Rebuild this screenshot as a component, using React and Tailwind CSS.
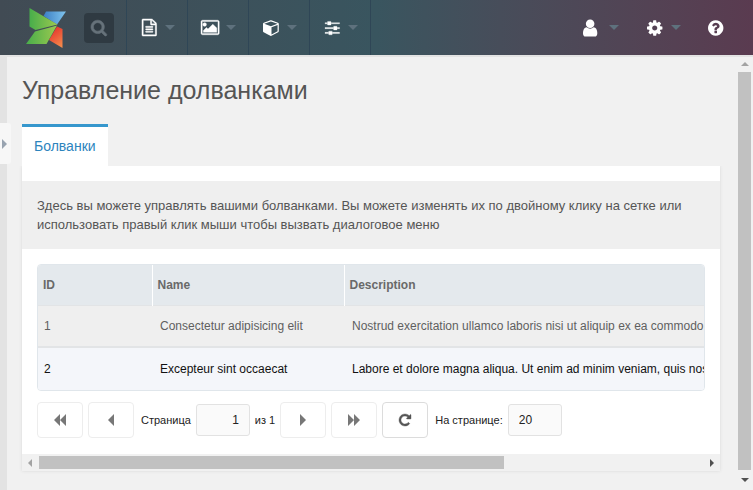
import React from "react";

const icons = {
  file: [1536, "M1468 380q28 28 48 76t20 88v1152q0 40-28 68t-68 28h-1344q-40 0-68-28t-28-68v-1600q0-40 28-68t68-28h896q40 0 88 20t76 48zM1024 136v376h376q-10-29-22-41l-313-313q-12-12-41-22zM1408 1664v-1024h-416q-40 0-68-28t-28-68v-416h-768v1536h1280zM384 800q0-14 9-23t23-9h704q14 0 23 9t9 23v64q0 14-9 23t-23 9h-704q-14 0-23-9t-9-23v-64zM1120 1024q14 0 23 9t9 23v64q0 14-9 23t-23 9h-704q-14 0-23-9t-9-23v-64q0-14 9-23t23-9h704zM1120 1280q14 0 23 9t9 23v64q0 14-9 23t-23 9h-704q-14 0-23-9t-9-23v-64q0-14 9-23t23-9h704z"],
  image: [1920, "M576 576q0 80-56 136t-136 56-136-56-56-136 56-136 136-56 136 56 56 136zM1664 960v448h-1408v-192l320-320 160 160 512-512zM1760 256h-1600q-13 0-22.5 9.5t-9.5 22.5v1216q0 13 9.5 22.5t22.5 9.5h1600q13 0 22.5-9.5t9.5-22.5v-1216q0-13-9.5-22.5t-22.5-9.5zM1920 288v1216q0 66-47 113t-113 47h-1600q-66 0-113-47t-47-113v-1216q0-66 47-113t113-47h1600q66 0 113 47t47 113z"],
  cube: [1664, "M896 1629l640-349v-636l-640 233v752zM832 765l698-254-698-254-698 254zM1664 512v768q0 35-18 65t-49 47l-704 384q-28 16-61 16t-61-16l-704-384q-31-17-49-47t-18-65v-768q0-40 23-73t61-47l704-256q22-8 44-8t44 8l704 256q38 14 61 47t23 73z"],
  sliders: [1536, "M352 1408v128h-352v-128h352zM704 1280q26 0 45 19t19 45v256q0 26-19 45t-45 19h-256q-26 0-45-19t-19-45v-256q0-26 19-45t45-19h256zM864 896v128h-864v-128h864zM224 384v128h-224v-128h224zM1536 1408v128h-736v-128h736zM576 256q26 0 45 19t19 45v256q0 26-19 45t-45 19h-256q-26 0-45-19t-19-45v-256q0-26 19-45t45-19h256zM1216 768q26 0 45 19t19 45v256q0 26-19 45t-45 19h-256q-26 0-45-19t-19-45v-256q0-26 19-45t45-19h256zM1536 896v128h-224v-128h224zM1536 384v128h-864v-128h864z"],
  user: [1280, "M1280 1399q0 109-62.5 187t-150.5 78h-854q-88 0-150.5-78t-62.5-187q0-85 8.5-160.5t31.5-152 58.5-131 94-89 134.5-34.5q131 128 313 128t313-128q76 0 134.5 34.5t94 89 58.5 131 31.5 152 8.5 160.5zM1024 512q0 159-112.5 271.5t-271.5 112.5-271.5-112.5-112.5-271.5 112.5-271.5 271.5-112.5 271.5 112.5 112.5 271.5z"],
  cog: [1536, "M1024 896q0-106-75-181t-181-75-181 75-75 181 75 181 181 75 181-75 75-181zM1536 787v222q0 12-8 23t-20 13l-185 28q-19 54-39 91 35 50 107 138 10 12 10 25t-9 23q-27 37-99 108t-94 71q-12 0-26-9l-138-108q-44 23-91 38-16 136-29 186-7 28-36 28h-222q-14 0-24.5-8.5t-11.5-21.5l-28-184q-49-16-90-37l-141 107q-10 9-25 9-14 0-25-11-126-114-165-168-7-10-7-23 0-12 8-23 15-21 51-66.5t54-70.5q-27-50-41-99l-183-27q-13-2-21-12.5t-8-23.5v-222q0-12 8-23t19-13l186-28q14-46 39-92-40-57-107-138-10-12-10-24 0-10 9-23 26-36 98.5-107.5t94.5-71.5q13 0 26 10l138 107q44-23 91-38 16-136 29-186 7-28 36-28h222q14 0 24.5 8.5t11.5 21.5l28 184q49 16 90 37l142-107q9-9 24-9 13 0 25 10 129 119 165 170 7 8 7 22 0 12-8 23-15 21-51 66.5t-54 70.5q26 50 41 98l183 28q13 2 21 12.5t8 23.5z"],
  help: [1536, "M896 1376v-192q0-14-9-23t-23-9h-192q-14 0-23 9t-9 23v192q0 14 9 23t23 9h192q14 0 23-9t9-23zM1152 704q0-88-55.5-163t-138.5-116-170-41q-243 0-371 213-15 24 8 42l132 100q7 6 19 6 16 0 25-12 53-68 86-92 34-24 86-24 48 0 85.5 26t37.5 59q0 38-20 61t-68 45q-63 28-115.5 86.5t-52.5 125.5v36q0 14 9 23t23 9h192q14 0 23-9t9-23q0-19 21.5-49.5t54.5-49.5q32-18 49-28.5t46-35 44.5-48 28-60.5 12.5-81zM1536 896q0 209-103 385.5t-279.5 279.5-385.5 103-385.5-103-279.5-279.5-103-385.5 103-385.5 279.5-279.5 385.5-103 385.5 103 279.5 279.5 103 385.5z"],
  search: [1664, "M1152 832q0-185-131.5-316.5t-316.5-131.5-316.5 131.5-131.5 316.5 131.5 316.5 316.5 131.5 316.5-131.5 131.5-316.5zM1664 1664q0 52-38 90t-90 38q-54 0-90-38l-343-342q-179 124-399 124-143 0-273.5-55.5t-225-150-150-225-55.5-273.5 55.5-273.5 150-225 225-150 273.5-55.5 273.5 55.5 225 150 150 225 55.5 273.5q0 220-124 399l343 343q37 37 37 90z"],
  repeat: [1536, "M1536 256v448q0 26-19 45t-45 19h-448q-42 0-59-40-17-39 14-69l138-138q-148-137-349-137-104 0-198.5 40.5t-163.5 109.5-109.5 163.5-40.500 198.500 40.500 198.500 109.500 163.500 163.500 109.500 198.500 40.500q119 0 225-52t179-147q7-10 23-12 15 0 25 9l137 138q9 8 9.500 20.500t-7.500 22.500q-109 132-264 204.500t-327 72.500q-156 0-298-61t-245-164-164-245-61-298 61-298 164-245 245-164 298-61q147 0 284.500 55.500t244.500 156.500l130-129q29-31 70-14 39 17 39 59z"],
};

function Icon({ name, className = "h-[18px]" }) {
  const [width, path] = icons[name];
  return (
    <svg viewBox={`0 0 ${width} 1792`} className={`${className} shrink-0 overflow-visible`} fill="currentColor" stroke="currentColor" aria-hidden="true">
      <path d={path} />
    </svg>
  );
}

function Arrow({ points, box, className }) {
  return (
    <svg viewBox={box} className={`${className} shrink-0`} fill="currentColor" aria-hidden="true">
      <path d={points} />
    </svg>
  );
}

const Caret = () => <Arrow box="0 0 10 5" points="M0 0h10L5 5z" className="h-[5px] w-[10px] text-[#5e717d]" />;

function Logo() {
  return (
    <svg viewBox="0 0 40 40" className="h-10 w-10" aria-hidden="true">
      <defs>
        <linearGradient id="leaf" x1="0" y1="0.5" x2="1" y2="0.5">
          <stop offset="0" stopColor="#48ad4b" />
          <stop offset="1" stopColor="#9bc94f" />
        </linearGradient>
        <linearGradient id="sky" x1="0" x2="1">
          <stop offset="0" stopColor="#3c7fc4" />
          <stop offset="1" stopColor="#7fc4ee" />
        </linearGradient>
        <linearGradient id="fire" x1="0.3" y1="0" x2="0.8" y2="1">
          <stop offset="0" stopColor="#e3302b" />
          <stop offset="1" stopColor="#f58a4b" />
        </linearGradient>
      </defs>
      <path d="M20 3.500H40L31 16.500 17.500 8z" fill="url(#sky)" />
      <path d="M31 18.500L36.500 21v19L23 32z" fill="url(#fire)" />
      <path d="M3.500 0L31.500 16.500 9.500 22 3.500 18.500z" fill="url(#leaf)" />
      <path d="M9 23.500L31 17.500 20.500 36H0z" fill="url(#leaf)" />
    </svg>
  );
}

const menu = [
  ["file", "Содержимое", "h-[17px] stroke-[50px]"],
  ["image", "Медиа", "h-[17px] stroke-[40px]"],
  ["cube", "Пакеты", "h-[17px]"],
  ["sliders", "Управление", "h-[17px] stroke-[30px]"],
];

function Header() {
  return (
    <header className="flex h-[55px] shrink-0 items-stretch bg-linear-to-r from-[#414b54] via-[#39555f] via-50% to-[#5a3b50] text-white">
      <a href="#home" aria-label="MODX" className="flex items-center pl-[26px]">
        <Logo />
      </a>
      <div className="flex items-center pr-3 pl-[18px]">
        <button type="button" aria-label="Поиск" className="flex size-[30px] items-center justify-center rounded-[4px] bg-[#2f3a42] text-[#66727a]">
          <Icon name="search" className="h-[17px] stroke-[60px]" />
        </button>
      </div>
      <nav className="flex border-r border-[#2f4656]">
        {menu.map(([icon, label, size]) => (
          <button key={icon} type="button" aria-label={label} className="flex w-[61px] items-center justify-between border-l border-[#2f4656] pr-3 pl-3">
            <span className="flex w-5 justify-center">
              <Icon name={icon} className={size} />
            </span>
            <Caret />
          </button>
        ))}
      </nav>
      <div className="ml-auto flex items-center pr-[30px]">
        <button type="button" aria-label="Профиль" className="flex items-center gap-3">
          <Icon name="user" className="h-5" />
          <Caret />
        </button>
        <button type="button" aria-label="Настройки" className="ml-7 flex items-center gap-2">
          <Icon name="cog" />
          <Caret />
        </button>
        <a href="#help" aria-label="Помощь" className="ml-[27px]">
          <Icon name="help" />
        </a>
      </div>
    </header>
  );
}

const rows = [
  [1, "Consectetur adipisicing elit", "Nostrud exercitation ullamco laboris nisi ut aliquip ex ea commodo"],
  [2, "Excepteur sint occaecat", "Labore et dolore magna aliqua. Ut enim ad minim veniam, quis nostrud"],
];

function Grid() {
  return (
    <div className="mx-[15px] mt-[15px] overflow-hidden rounded-[4px] border border-[#e0e6eb]">
      <table className="w-full table-fixed border-collapse text-left text-xs leading-4 whitespace-nowrap">
        <thead>
          <tr className="h-10 bg-[#e4e9ed] text-[#696969]">
            <th className="w-[114px] border-r border-white px-[5px]">ID</th>
            <th className="w-48 border-r border-white px-[5px]">Name</th>
            <th className="px-[5px]">Description</th>
          </tr>
        </thead>
        <tbody>
          {rows.map(([id, name, text]) => (
            <tr key={id} className="h-[42px] border-t border-[#e2e4e6] bg-[#efefef] text-[#5f5f5f] even:h-[43px] even:border-t-2 even:bg-[#f4f6fa] even:text-[#111]">
              <td className="px-[6px]">{id}</td>
              <td className="px-2">{name}</td>
              <td className="pl-2">{text}</td>
            </tr>
          ))}
        </tbody>
      </table>
    </div>
  );
}

function PagerButton({ label, active, children }) {
  return (
    <button
      type="button"
      aria-label={label}
      className={`flex h-9 w-[46px] shrink-0 items-center justify-center rounded-[4px] border bg-white ${active ? "border-[#dcdcdc] text-[#555]" : "border-[#ededed] text-[#777]"}`}
    >
      {children}
    </button>
  );
}

const inputStyle = "h-8 w-[54px] shrink-0 rounded-[3px] border border-[#e2e2e2] bg-[#fafafa] px-[10px] text-xs text-[#222]";

function Pager() {
  return (
    <div className="mt-[11px] mb-4 flex items-center gap-[5px] px-[15px] text-[11px] whitespace-nowrap text-[#222]">
      <PagerButton label="Первая страница">
        <Arrow box="0 0 12 12" points="M6 0v12L0 6zM12 0v12L6 6z" className="h-3 w-3" />
      </PagerButton>
      <PagerButton label="Предыдущая страница">
        <Arrow box="0 0 6 12" points="M6 0v12L0 6z" className="h-3 w-[6px]" />
      </PagerButton>
      <label htmlFor="page" className="pl-[2px]">Страница</label>
      <input id="page" defaultValue="1" className={`${inputStyle} text-right`} />
      <span>из 1</span>
      <PagerButton label="Следующая страница">
        <Arrow box="0 0 6 12" points="M0 0v12l6-6z" className="h-3 w-[6px]" />
      </PagerButton>
      <PagerButton label="Последняя страница">
        <Arrow box="0 0 12 12" points="M0 0v12l6-6zM6 0v12l6-6z" className="h-3 w-3" />
      </PagerButton>
      <PagerButton label="Обновить" active>
        <Icon name="repeat" className="h-[14px] stroke-[50px]" />
      </PagerButton>
      <label htmlFor="limit" className="pl-[2px]">На странице:</label>
      <input id="limit" defaultValue="20" className={inputStyle} />
    </div>
  );
}

export default function App() {
  return (
    <div className="flex h-screen flex-col overflow-hidden bg-[#f1f1f1] font-['Liberation_Sans',Arial,sans-serif]">
      <Header />
      <div className="relative flex min-h-0 flex-1 border-t-2 border-[#e3e3e3]">
        <div className="w-[7px] shrink-0 bg-[#e3e3e3]" />
        <button type="button" aria-label="Показать дерево" className="absolute top-[66px] left-0 flex h-[41px] w-[11px] items-center rounded-r-[3px] bg-[#f7f7f7] pl-[2px] text-[#98a3b0]">
          <Arrow box="0 0 5 10" points="M0 0v10l5-5z" className="h-[10px] w-[5px]" />
        </button>
        <main className="min-w-0 flex-1 pr-4 pl-[15px]">
          <h1 className="mt-[17px] text-[25px] leading-8 text-[#555]">Управление долванками</h1>
          <div className="mt-[18px] flex" role="tablist">
            <button type="button" role="tab" aria-selected="true" className="h-[42px] border-t-3 border-[#3697cd] bg-white px-3 pb-[2px] text-sm text-[#2d84bd]">
              Болванки
            </button>
          </div>
          <section className="bg-white pt-[15px] shadow-[0_0_3px_#d8d8d8] [clip-path:inset(0_-4px_-4px_-4px)]">
            <p className="bg-[#efefef] px-[15px] py-[15px] text-[13px] leading-[19px] text-[#555]">
              Здесь вы можете управлять вашими болванками. Вы можете изменять их по двойному клику на сетке или использовать правый клик мыши чтобы вызвать диалоговое меню
            </p>
            <Grid />
            <Pager />
            <div className="flex h-[17px] items-center gap-[7px] bg-[#f1f1f1] px-[6px]">
              <Arrow box="0 0 4 8" points="M4 0v8L0 4z" className="h-2 w-1 text-[#a3a3a3]" />
              <div className="flex flex-1">
                <div className="h-[13px] w-[70%] bg-[#c1c1c1]" />
              </div>
              <Arrow box="0 0 4 8" points="M0 0v8l4-4z" className="h-2 w-1 text-[#505050]" />
            </div>
          </section>
        </main>
        <div className="flex w-[17px] shrink-0 flex-col items-center bg-[#f1f1f1] pt-[5px] pb-2">
          <Arrow box="0 0 8 4" points="M0 4h8L4 0z" className="h-1 w-2 text-[#a3a3a3]" />
          <div className="mt-[6px] mb-2 w-[13px] flex-1 bg-[#c1c1c1]" />
          <Arrow box="0 0 8 4" points="M0 0h8L4 4z" className="h-1 w-2 text-[#505050]" />
        </div>
      </div>
    </div>
  );
}
